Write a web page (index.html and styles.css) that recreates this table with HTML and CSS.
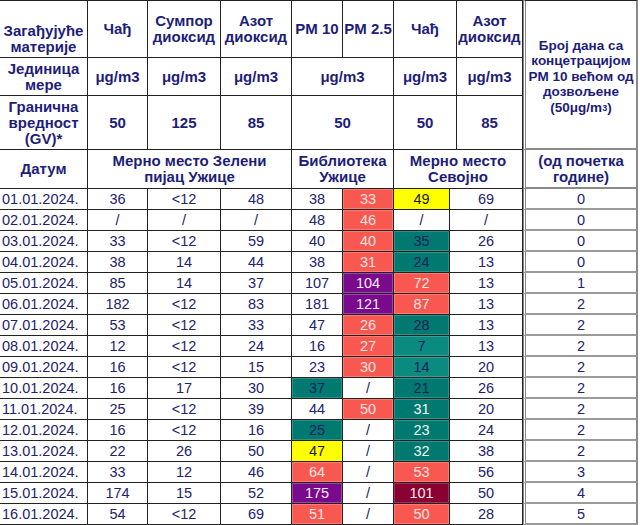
FILE: index.html
```html
<!DOCTYPE html>
<html lang="sr">
<head>
<meta charset="utf-8">
<title>Квалитет ваздуха</title>
<link rel="stylesheet" href="styles.css">
</head>
<body>
<table class="grid head">
  <colgroup>
    <col class="w88"><col class="w60"><col class="w73"><col class="w71"><col class="w51"><col class="w51"><col class="w63"><col class="w66"><col class="w115">
  </colgroup>
  <tr class="h1">
    <td class="lab lab-bottom">Загађујуће<br>материје</td>
    <td>Чађ</td>
    <td>Сумпор<br>диоксид</td>
    <td>Азот<br>диоксид</td>
    <td>PM 10</td>
    <td>PM 2.5</td>
    <td>Чађ</td>
    <td>Азот<br>диоксид</td>
    <td class="side side-top" rowspan="3">Број дана са<br>концетрацијом<br>PM 10 већом од<br>дозвољене<br>(50μg/m<span class="sm">3</span>)</td>
  </tr>
  <tr class="h2">
    <td class="lab">Јединица<br>мере</td>
    <td>μg/m3</td>
    <td>μg/m3</td>
    <td>μg/m3</td>
    <td colspan="2">μg/m3</td>
    <td>μg/m3</td>
    <td>μg/m3</td>
  </tr>
  <tr class="h3">
    <td class="lab">Гранична<br>вредност<br>(GV)*</td>
    <td>50</td>
    <td>125</td>
    <td>85</td>
    <td colspan="2">50</td>
    <td>50</td>
    <td>85</td>
  </tr>
  <tr class="h4">
    <td class="lab">Датум</td>
    <td colspan="3">Мерно место Зелени<br>пијац Ужице</td>
    <td colspan="2">Библиотека<br>Ужице</td>
    <td colspan="2">Мерно место<br>Севојно</td>
    <td class="side side-sub">(од почетка<br>године)</td>
  </tr>
</table>
<table class="grid body">
  <colgroup>
    <col class="w88"><col class="w60"><col class="w73"><col class="w71"><col class="w51"><col class="w51"><col class="w56"><col class="w73"><col class="w115">
  </colgroup>
  <tr><td class="date">01.01.2024.</td><td>36</td><td>&lt;12</td><td>48</td><td>38</td><td class="red">33</td><td class="yel">49</td><td>69</td><td class="side">0</td></tr>
  <tr><td class="date">02.01.2024.</td><td>/</td><td>/</td><td>/</td><td>48</td><td class="red">46</td><td>/</td><td>/</td><td class="side">0</td></tr>
  <tr><td class="date">03.01.2024.</td><td>33</td><td>&lt;12</td><td>59</td><td>40</td><td class="red">40</td><td class="teal">35</td><td>26</td><td class="side">0</td></tr>
  <tr><td class="date">04.01.2024.</td><td>38</td><td>14</td><td>44</td><td>38</td><td class="red">31</td><td class="teal">24</td><td>13</td><td class="side">0</td></tr>
  <tr><td class="date">05.01.2024.</td><td>85</td><td>14</td><td>37</td><td>107</td><td class="pur">104</td><td class="red">72</td><td>13</td><td class="side">1</td></tr>
  <tr><td class="date">06.01.2024.</td><td>182</td><td>&lt;12</td><td>83</td><td>181</td><td class="pur">121</td><td class="red">87</td><td>13</td><td class="side">2</td></tr>
  <tr><td class="date">07.01.2024.</td><td>53</td><td>&lt;12</td><td>33</td><td>47</td><td class="red">26</td><td class="teal">28</td><td>13</td><td class="side">2</td></tr>
  <tr><td class="date">08.01.2024.</td><td>12</td><td>&lt;12</td><td>24</td><td>16</td><td class="red">27</td><td class="teal2">7</td><td>13</td><td class="side">2</td></tr>
  <tr><td class="date">09.01.2024.</td><td>16</td><td>&lt;12</td><td>15</td><td>23</td><td class="red">30</td><td class="teal2">14</td><td>20</td><td class="side">2</td></tr>
  <tr><td class="date">10.01.2024.</td><td>16</td><td>17</td><td>30</td><td class="teal">37</td><td>/</td><td class="teal">21</td><td>26</td><td class="side">2</td></tr>
  <tr><td class="date">11.01.2024.</td><td>25</td><td>&lt;12</td><td>39</td><td>44</td><td class="red">50</td><td class="teal light">31</td><td>20</td><td class="side">2</td></tr>
  <tr><td class="date">12.01.2024.</td><td>16</td><td>&lt;12</td><td>16</td><td class="teal">25</td><td>/</td><td class="teal light">23</td><td>24</td><td class="side">2</td></tr>
  <tr><td class="date">13.01.2024.</td><td>22</td><td>26</td><td>50</td><td class="yel">47</td><td>/</td><td class="teal light">32</td><td>38</td><td class="side">2</td></tr>
  <tr><td class="date">14.01.2024.</td><td>33</td><td>12</td><td>46</td><td class="red">64</td><td>/</td><td class="red">53</td><td>56</td><td class="side">3</td></tr>
  <tr><td class="date">15.01.2024.</td><td>174</td><td>15</td><td>52</td><td class="pur">175</td><td>/</td><td class="dred">101</td><td>50</td><td class="side">4</td></tr>
  <tr><td class="date">16.01.2024.</td><td>54</td><td>&lt;12</td><td>69</td><td class="red">51</td><td>/</td><td class="red">50</td><td>28</td><td class="side">5</td></tr>
</table>
</body>
</html>
```

FILE: styles.css
```css
html, body {
  margin: 0;
  padding: 0;
  background: #ffffff;
}

body {
  font-family: "Liberation Sans", Arial, sans-serif;
  color: #1f1f72;
}

.grid {
  width: 638px;
  table-layout: fixed;
  border-collapse: separate;
  border-spacing: 0;
}

.w88 { width: 88px; }
.w60 { width: 60px; }
.w73 { width: 73px; }
.w71 { width: 71px; }
.w51 { width: 51px; }
.w63 { width: 63px; }
.w66 { width: 66px; }
.w56 { width: 56px; }
.w115 { width: 115px; }

.grid td {
  padding: 0;
  text-align: center;
  vertical-align: middle;
  border-right: 1px solid #222;
  border-bottom: 1px solid #222;
  overflow: hidden;
  white-space: nowrap;
}

/* header */
.head td {
  font-weight: bold;
  font-size: 15px;
  line-height: 16px;
  color: #1d1d7a;
}

.head .h1 td {
  height: 54px;
  border-top: 1px solid #222;
}

.head .h2 td { height: 37px; }
.head .h3 td { height: 53px; }
.head .h4 td { height: 37px; }

.head .lab-bottom {
  vertical-align: bottom;
  padding-bottom: 2px;
}

.head .side {
  font-size: 13.5px;
  line-height: 15.5px;
  border-left: 3px double #8a8a8a;
  border-right: 2px solid #8a8a8a;
  border-bottom: 2px solid #8a8a8a;
}

.head .side-top {
  border-top: 2px solid #8a8a8a;
  padding-top: 5px;
}

.head .side-sub {
  font-size: 15px;
  line-height: 16px;
}

.sm {
  font-size: 9px;
  vertical-align: 1px;
}

/* body */
.body td {
  height: 20px;
  font-size: 14.5px;
  line-height: 18px;
  color: #22226e;
}

.body .date {
  text-align: left;
  padding-left: 2px;
}

.body .side {
  border-left: 3px double #8a8a8a;
  border-right: 2px solid #8a8a8a;
  border-bottom: 2px solid #9a9a9a;
  height: 19px;
}

.red {
  background: #f8584f;
  color: #ffe4e4 !important;
  box-shadow: inset 0 0 0 1px rgba(255, 255, 255, 0.22);
}

.yel {
  background: #ffff00;
  color: #1a1a1a !important;
}

.teal {
  background: #007a70;
  color: #16205a !important;
  box-shadow: inset 0 0 0 1px rgba(255, 255, 255, 0.18);
}

.teal2 {
  background: #0b8a80;
  color: #16205a !important;
  box-shadow: inset 0 0 0 1px rgba(255, 255, 255, 0.18);
}

.teal.light {
  color: #f2f6f6 !important;
}

.pur {
  background: #7a0a8c;
  color: #f6e8f8 !important;
  box-shadow: inset 0 0 0 1px rgba(255, 255, 255, 0.25);
}

.dred {
  background: #8a0032;
  color: #fbe6ea !important;
  box-shadow: inset 0 0 0 1px rgba(255, 255, 255, 0.2);
}
```
